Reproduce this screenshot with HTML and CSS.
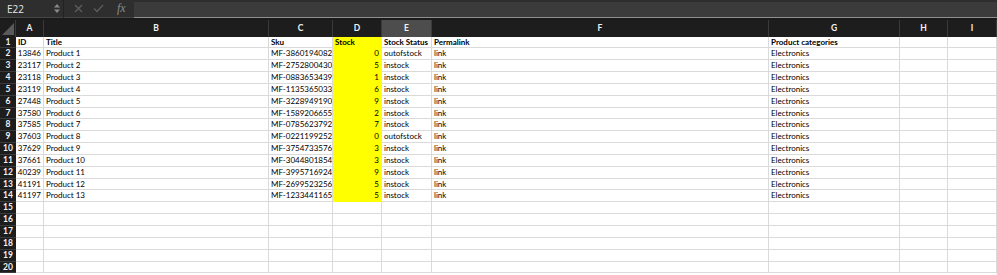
FILE: index.html
```html
<!DOCTYPE html>
<html>
<head>
<meta charset="utf-8">
<link rel="stylesheet" href="styles.css">
</head>
<body>
<div class="app">
  <div class="toolbar">
    <div class="namebox">E22</div>
    <div class="spinner">
      <svg width="6" height="11" viewBox="0 0 6 11"><path d="M0 4.5 L3 1 L6 4.5 Z M0 6.5 L3 10 L6 6.5 Z" fill="#8a8a8a"/></svg>
    </div>
    <div class="sep"></div>
    <div class="fbtn first">
      <svg width="9" height="9" viewBox="0 0 9 9"><path d="M1 1 L8 8 M8 1 L1 8" stroke="#5c5c5c" stroke-width="1.4"/></svg>
    </div>
    <div class="fbtn">
      <svg width="11" height="9" viewBox="0 0 11 9"><path d="M1 4.5 L4 7.5 L10 1" stroke="#5c5c5c" stroke-width="1.4" fill="none"/></svg>
    </div>
    <div class="fx">fx</div>
    <div class="formula"></div>
  </div>
  <div class="gap"></div>
  <div class="sheet">
    <div class="row head">
      <span class="corner"><svg width="12" height="12" viewBox="0 0 12 12"><path d="M12 0 L12 12 L0 12 Z" fill="#595959"/></svg></span>
      <span class="ch">A</span><span class="ch">B</span><span class="ch">C</span><span class="ch">D</span><span class="ch sel">E</span><span class="ch">F</span><span class="ch">G</span><span class="ch">H</span><span class="ch">I</span>
    </div>
    <div class="row"><span class="rh">1</span><span class="c b">ID</span><span class="c b">Title</span><span class="c b">Sku</span><span class="c y b">Stock</span><span class="c b">Stock Status</span><span class="c b">Permalink</span><span class="c b">Product categories</span><span class="c"></span><span class="c"></span></div>
    <div class="row"><span class="rh">2</span><span class="c n">13846</span><span class="c">Product 1</span><span class="c">MF-3860194082</span><span class="c y n">0</span><span class="c">outofstock</span><span class="c">link</span><span class="c">Electronics</span><span class="c"></span><span class="c"></span></div>
    <div class="row"><span class="rh">3</span><span class="c n">23117</span><span class="c">Product 2</span><span class="c">MF-2752800430</span><span class="c y n">5</span><span class="c">instock</span><span class="c">link</span><span class="c">Electronics</span><span class="c"></span><span class="c"></span></div>
    <div class="row"><span class="rh">4</span><span class="c n">23118</span><span class="c">Product 3</span><span class="c">MF-0883653439</span><span class="c y n">1</span><span class="c">instock</span><span class="c">link</span><span class="c">Electronics</span><span class="c"></span><span class="c"></span></div>
    <div class="row"><span class="rh">5</span><span class="c n">23119</span><span class="c">Product 4</span><span class="c">MF-1135365033</span><span class="c y n">6</span><span class="c">instock</span><span class="c">link</span><span class="c">Electronics</span><span class="c"></span><span class="c"></span></div>
    <div class="row"><span class="rh">6</span><span class="c n">27448</span><span class="c">Product 5</span><span class="c">MF-3228949190</span><span class="c y n">9</span><span class="c">instock</span><span class="c">link</span><span class="c">Electronics</span><span class="c"></span><span class="c"></span></div>
    <div class="row"><span class="rh">7</span><span class="c n">37580</span><span class="c">Product 6</span><span class="c">MF-1589206655</span><span class="c y n">2</span><span class="c">instock</span><span class="c">link</span><span class="c">Electronics</span><span class="c"></span><span class="c"></span></div>
    <div class="row"><span class="rh">8</span><span class="c n">37585</span><span class="c">Product 7</span><span class="c">MF-0785623792</span><span class="c y n">7</span><span class="c">instock</span><span class="c">link</span><span class="c">Electronics</span><span class="c"></span><span class="c"></span></div>
    <div class="row"><span class="rh">9</span><span class="c n">37603</span><span class="c">Product 8</span><span class="c">MF-0221199252</span><span class="c y n">0</span><span class="c">outofstock</span><span class="c">link</span><span class="c">Electronics</span><span class="c"></span><span class="c"></span></div>
    <div class="row"><span class="rh">10</span><span class="c n">37629</span><span class="c">Product 9</span><span class="c">MF-3754733576</span><span class="c y n">3</span><span class="c">instock</span><span class="c">link</span><span class="c">Electronics</span><span class="c"></span><span class="c"></span></div>
    <div class="row"><span class="rh">11</span><span class="c n">37661</span><span class="c">Product 10</span><span class="c">MF-3044801854</span><span class="c y n">3</span><span class="c">instock</span><span class="c">link</span><span class="c">Electronics</span><span class="c"></span><span class="c"></span></div>
    <div class="row"><span class="rh">12</span><span class="c n">40239</span><span class="c">Product 11</span><span class="c">MF-3995716924</span><span class="c y n">9</span><span class="c">instock</span><span class="c">link</span><span class="c">Electronics</span><span class="c"></span><span class="c"></span></div>
    <div class="row"><span class="rh">13</span><span class="c n">41191</span><span class="c">Product 12</span><span class="c">MF-2699523256</span><span class="c y n">5</span><span class="c">instock</span><span class="c">link</span><span class="c">Electronics</span><span class="c"></span><span class="c"></span></div>
    <div class="row"><span class="rh">14</span><span class="c n">41197</span><span class="c">Product 13</span><span class="c">MF-1233441165</span><span class="c y n">5</span><span class="c">instock</span><span class="c">link</span><span class="c">Electronics</span><span class="c"></span><span class="c"></span></div>
    <div class="row"><span class="rh">15</span><span class="c"></span><span class="c"></span><span class="c"></span><span class="c"></span><span class="c"></span><span class="c"></span><span class="c"></span><span class="c"></span><span class="c"></span></div>
    <div class="row"><span class="rh">16</span><span class="c"></span><span class="c"></span><span class="c"></span><span class="c"></span><span class="c"></span><span class="c"></span><span class="c"></span><span class="c"></span><span class="c"></span></div>
    <div class="row"><span class="rh">17</span><span class="c"></span><span class="c"></span><span class="c"></span><span class="c"></span><span class="c"></span><span class="c"></span><span class="c"></span><span class="c"></span><span class="c"></span></div>
    <div class="row"><span class="rh">18</span><span class="c"></span><span class="c"></span><span class="c"></span><span class="c"></span><span class="c"></span><span class="c"></span><span class="c"></span><span class="c"></span><span class="c"></span></div>
    <div class="row"><span class="rh">19</span><span class="c"></span><span class="c"></span><span class="c"></span><span class="c"></span><span class="c"></span><span class="c"></span><span class="c"></span><span class="c"></span><span class="c"></span></div>
    <div class="row"><span class="rh">20</span><span class="c"></span><span class="c"></span><span class="c"></span><span class="c"></span><span class="c"></span><span class="c"></span><span class="c"></span><span class="c"></span><span class="c"></span></div>
  </div>
</div>
</body>
</html>
```
FILE: styles.css
```css
html, body {
  margin: 0;
  padding: 0;
  background: #ffffff;
  overflow: hidden;
}
.app {
  width: 997px;
  height: 275px;
  font-family: Lato, "Open Sans", sans-serif;
  font-size: 8px;
  color: #000;
  overflow: hidden;
}
.toolbar {
  height: 18px;
  background: #2e2e2e;
  display: flex;
  align-items: center;
  box-sizing: border-box;
  border-bottom: 1px solid #454545;
}
.namebox {
  width: 52px;
  padding-left: 7px;
  box-sizing: border-box;
  color: #e6e6e6;
  font-family: "Open Sans", Lato, sans-serif;
  font-size: 10px;
}
.spinner {
  width: 10px;
  display: flex;
  justify-content: center;
  align-items: center;
}
.sep {
  width: 1px;
  height: 18px;
  background: #232323;
  margin-left: 1px;
}
.fbtn {
  width: 20px;
  display: flex;
  justify-content: center;
  align-items: center;
}
.fbtn.first { margin-left: 4px; }
.fx {
  width: 26px;
  color: #8c8c8c;
  font-family: "Liberation Serif", serif;
  font-style: italic;
  font-size: 12px;
  padding-left: 9px;
  box-sizing: border-box;
}
.formula {
  flex: 1;
  align-self: stretch;
  margin-top: 2px;
  background: #3b3b3b;
  border-bottom: 1px solid #8f8f8f;
  margin-bottom: -1px;
}
.gap {
  height: 2px;
  background: #1a1a1a;
}
.sheet {
  display: flex;
  flex-direction: column;
}
.row {
  display: grid;
  grid-template-columns: 16px 28px 225px 64px 49px 50px 337px 131px 48px 49px;
  height: 11.85px;
  line-height: 11.5px;
}
.row.head {
  height: 16.5px;
  line-height: 16px;
  background: #1d1d1d;
}
.corner {
  display: flex;
  justify-content: flex-end;
  align-items: flex-end;
  padding: 0 1px 2px 0;
  box-sizing: border-box;
  border-right: 1px solid #3a3a3a;
}
.ch {
  color: #f2f2f2;
  font-weight: bold;
  font-size: 8.5px;
  text-align: center;
  border-right: 1px solid #3a3a3a;
  box-sizing: border-box;
}
.ch.sel {
  background: #4d4d4d;
}
.rh {
  background: #1d1d1d;
  color: #f2f2f2;
  font-weight: bold;
  font-size: 8.5px;
  text-align: center;
  border-bottom: 1px solid #3a3a3a;
  box-sizing: border-box;
  overflow: hidden;
}
.c {
  border-right: 1px solid #dadada;
  border-bottom: 1px solid #dadada;
  box-sizing: border-box;
  padding-left: 2px;
  white-space: nowrap;
  overflow: hidden;
}
.c.n {
  text-align: right;
  padding-left: 0;
  padding-right: 2px;
}
.c.b {
  font-weight: bold;
}
.c.y {
  background: #ffff00;
  border-color: #ffff00;
}
```
